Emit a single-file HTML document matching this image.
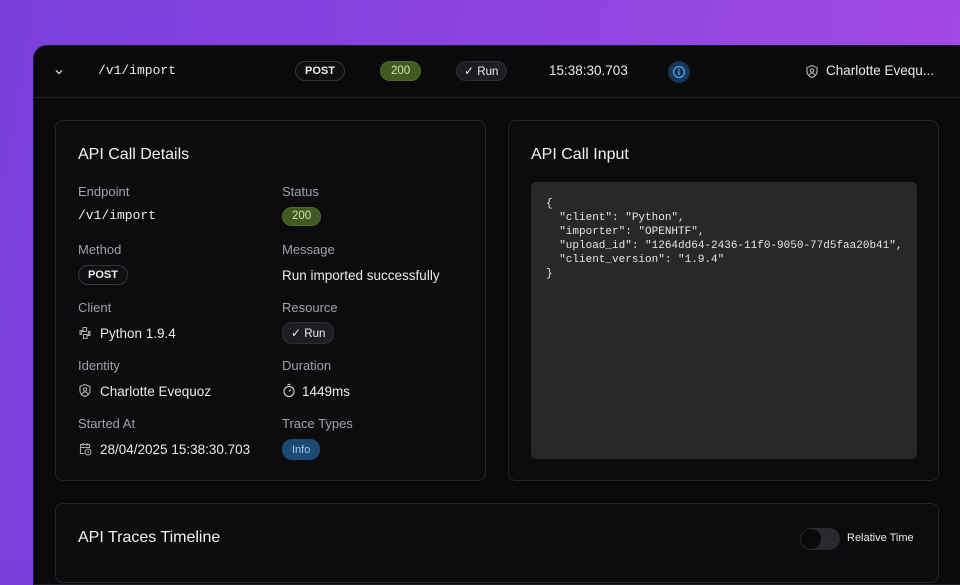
<!DOCTYPE html>
<html><head><meta charset="utf-8"><style>
*{box-sizing:border-box;margin:0;padding:0}
body{width:960px;height:555px;overflow:hidden;background:linear-gradient(100deg,#7a3fdc 0%,#8e44e0 50%,#a54ae2 100%);font-family:"Liberation Sans",sans-serif;color:#ececef;position:relative}
.win{position:absolute;left:33px;top:45px;width:960px;height:540px;background:#0a0a0c;border-radius:14px 0 0 0;border:1px solid #1d1d22}
.hdr{position:absolute;left:0;top:0;right:0;height:52px;border-bottom:1px solid #202026}
.abs{position:absolute}
.mono{font-family:"Liberation Mono",monospace}
.pill{position:absolute;border-radius:10px;font-size:11px;font-weight:bold;height:20px;line-height:18px;padding:0 9px;border:1px solid #34343a;background:#0f0f12}
.g{background:#3f5a23;border-color:#4d6b2a;color:#cfe6a8;font-weight:normal;font-size:11.5px}
.run{background:#1e1e22;border-color:#2c2c32;font-weight:normal;font-size:11.5px}
.card{position:absolute;background:#0c0c0f;border:1px solid #232329;border-radius:8px}
h2{position:absolute;font-size:16px;font-weight:normal;color:#f3f3f5}
.lbl{position:absolute;font-size:13px;color:#a1a1aa}
.val{position:absolute;font-size:13.5px;color:#ececef}
svg{position:absolute}
</style></head><body>
<div class="win">
 <div class="hdr">
  <svg style="left:20px;top:21px" width="10" height="10" viewBox="0 0 10 10"><path d="M2 3.5l3 3 3-3" stroke="#ccc" stroke-width="1.4" fill="none"/></svg>
  <div class="abs mono" style="left:64px;top:17px;font-size:13px">/v1/import</div>
  <div class="pill" style="left:261px;top:15px">POST</div>
  <div class="pill g" style="left:346px;top:15px;padding:0 10px">200</div>
  <div class="pill run" style="left:422px;top:15px;padding:0 8px 0 7px"><span style="font-size:12px">✓</span> Run</div>
  <div class="abs" style="left:515px;top:17px;font-size:13.5px">15:38:30.703</div>
  <div class="abs" style="left:634px;top:15px;width:22px;height:22px;border-radius:11px;background:#163552"></div>
  <svg style="left:638px;top:19px" width="14" height="14" viewBox="0 0 14 14"><circle cx="7" cy="7" r="5.5" stroke="#4aa3f0" stroke-width="1.3" fill="none"/><path d="M7 6.3v3.3M7 4.3v.3" stroke="#4aa3f0" stroke-width="1.4" stroke-linecap="round"/></svg>
  <svg style="left:771px;top:18px" width="14" height="15" viewBox="0 0 14 15"><path d="M7 1.5l5 2v4c0 3-2.3 5-5 6-2.7-1-5-3-5-6v-4z" stroke="#aaa" stroke-width="1.2" fill="none"/><circle cx="7" cy="6.5" r="1.7" stroke="#aaa" stroke-width="1.1" fill="none"/><path d="M4.3 11c.6-1.3 1.5-2 2.7-2s2.1.7 2.7 2" stroke="#aaa" stroke-width="1.1" fill="none"/></svg>
  <div class="abs" style="left:792px;top:17px;font-size:13.5px">Charlotte Evequ...</div>
 </div>
</div>
<div class="card" style="left:55px;top:120px;width:431px;height:361px">
 <h2 style="left:22px;top:25px">API Call Details</h2>
 <div class="lbl" style="left:22px;top:63px">Endpoint</div>
 <div class="val mono" style="left:22px;top:87px;font-size:13px">/v1/import</div>
 <div class="lbl" style="left:226px;top:63px">Status</div>
 <div class="pill g" style="left:226px;top:86px;height:19px;line-height:17px;padding:0 9px">200</div>
 <div class="lbl" style="left:22px;top:121px">Method</div>
 <div class="pill" style="left:22px;top:144px">POST</div>
 <div class="lbl" style="left:226px;top:121px">Message</div>
 <div class="val" style="left:226px;top:147px">Run imported successfully</div>
 <div class="lbl" style="left:22px;top:179px">Client</div>
 <svg style="left:22px;top:205px" width="14" height="14" viewBox="0 0 14 14"><path d="M5 1.5h3.5v4h-5v3H2v-4h3zM9 12.5H5.5v-4h5v-3H12v4H9z" stroke="#aaa" stroke-width="1.1" fill="none"/></svg>
 <div class="val" style="left:44px;top:205px">Python 1.9.4</div>
 <div class="lbl" style="left:226px;top:179px">Resource</div>
 <div class="pill run" style="left:226px;top:201px;height:22px;line-height:20px;padding:0 8px"><span style="font-size:12px">✓</span> Run</div>
 <div class="lbl" style="left:22px;top:237px">Identity</div>
 <svg style="left:22px;top:262px" width="14" height="15" viewBox="0 0 14 15"><path d="M7 1.5l5 2v4c0 3-2.3 5-5 6-2.7-1-5-3-5-6v-4z" stroke="#aaa" stroke-width="1.2" fill="none"/><circle cx="7" cy="6.5" r="1.7" stroke="#aaa" stroke-width="1.1" fill="none"/><path d="M4.3 11c.6-1.3 1.5-2 2.7-2s2.1.7 2.7 2" stroke="#aaa" stroke-width="1.1" fill="none"/></svg>
 <div class="val" style="left:44px;top:263px">Charlotte Evequoz</div>
 <div class="lbl" style="left:226px;top:237px">Duration</div>
 <svg style="left:226px;top:262px" width="14" height="15" viewBox="0 0 14 15"><circle cx="7" cy="8.5" r="5" stroke="#ccc" stroke-width="1.2" fill="none"/><path d="M5.5 1.5h3M7 8.5l2-2" stroke="#ccc" stroke-width="1.2"/></svg>
 <div class="val" style="left:246px;top:263px">1449ms</div>
 <div class="lbl" style="left:22px;top:295px">Started At</div>
 <svg style="left:22px;top:320px" width="14" height="15" viewBox="0 0 14 15"><path d="M6 12.5H2.5v-9h9v3M2.5 6.5h9M5 2v3M9 2v3" stroke="#aaa" stroke-width="1.1" fill="none"/><circle cx="10" cy="11" r="3" stroke="#aaa" stroke-width="1.1" fill="none"/><path d="M10 9.8v1.4l.9.6" stroke="#aaa" stroke-width="1"/></svg>
 <div class="val" style="left:44px;top:321px">28/04/2025 15:38:30.703</div>
 <div class="lbl" style="left:226px;top:295px">Trace Types</div>
 <div class="pill" style="left:226px;top:318px;background:#1c4a72;border-color:#1c4a72;color:#9cc9ef;padding:0 9px;height:21px;line-height:20px;font-weight:normal">Info</div>
</div>
<div class="card" style="left:508px;top:120px;width:431px;height:361px">
 <h2 style="left:22px;top:25px">API Call Input</h2>
 <div class="abs mono" style="left:22px;top:61px;width:386px;height:277px;background:#28282b;border-radius:5px;padding:15px 15px;font-size:11px;line-height:14px;color:#e4e4e7;white-space:pre">{
  "client": "Python",
  "importer": "OPENHTF",
  "upload_id": "1264dd64-2436-11f0-9050-77d5faa20b41",
  "client_version": "1.9.4"
}</div>
</div>
<div class="card" style="left:55px;top:503px;width:884px;height:80px">
 <h2 style="left:22px;top:25px">API Traces Timeline</h2>
 <div class="abs" style="left:744px;top:24px;width:40px;height:22px;border-radius:11px;background:#2a2a2e"></div>
 <div class="abs" style="left:745px;top:25px;width:20px;height:20px;border-radius:10px;background:#0a0a0c"></div>
 <div class="abs" style="left:791px;top:28px;font-size:11px">Relative Time</div>
</div>
</body></html>
